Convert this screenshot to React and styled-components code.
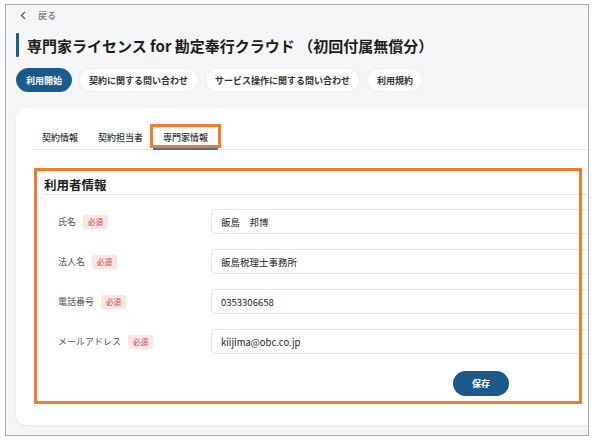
import React from 'react';
import styled, {createGlobalStyle} from 'styled-components';

const GlobalStyle = createGlobalStyle`
    body {
        margin: 0;
        background: #ffffff;
        font-family: "Noto Sans CJK JP", "Noto Sans", sans-serif;
    }
`;

const BLUE = '#1d5a8c';
const ORANGE = '#ee7d2f';

const Frame = styled.div`
    margin: 4px 5px;
    width: 572px;
    height: 430px;
    border: 1px solid #a8a8a8;
    background: #f5f6f8;
    overflow: hidden;
    display: flex;
    flex-direction: column;
    padding: 0 0 0 10px;
    box-sizing: content-box;
`;

const BackRow = styled.div`
    display: flex;
    align-items: center;
    height: 20px;
    padding-left: 4px;
    gap: 11px;
    font-size: 9px;
    color: #555;
`;

const TitleRow = styled.div`
    display: flex;
    align-items: center;
    margin-top: 8px;
    height: 24px;
    gap: 8px;
`;

const TitleBar = styled.span`
    width: 3px;
    height: 24px;
    background: ${BLUE};
    border-radius: 1px;
`;

const Title = styled.h1`
    margin: 0;
    font-size: 15px;
    font-weight: 700;
    color: #1c1c1c;
    white-space: nowrap;
`;

const PillRow = styled.div`
    display: flex;
    gap: 7px;
    margin-top: 11px;
`;

const Pill = styled.button`
    height: 24px;
    padding: 0 9px;
    border-radius: 12px;
    border: 1px solid ${p => p.active ? BLUE : '#eceef1'};
    background: ${p => p.active ? BLUE : '#ffffff'};
    color: ${p => p.active ? '#ffffff' : '#333'};
    font-family: inherit;
    font-size: 9px;
    font-weight: 600;
    white-space: nowrap;
    cursor: pointer;
`;

const Card = styled.div`
    margin-top: 16px;
    width: 600px;
    flex: none;
    height: 317px;
    background: #ffffff;
    border-radius: 10px 0 0 10px;
    box-shadow: 0 1px 3px rgba(0, 0, 0, 0.07);
    padding: 17px 0 0 16px;
    box-sizing: border-box;
`;

const Tabs = styled.div`
    display: flex;
    height: 24px;
    border-bottom: 1px solid #e8e8e8;
`;

const Tab = styled.div`
    position: relative;
    display: flex;
    align-items: center;
    padding: 0 10px;
    font-size: 9px;
    font-weight: 500;
    color: #333;
    white-space: nowrap;
    ${p => p.active && `
        &::after {
            content: '';
            position: absolute;
            left: 0;
            right: 0;
            bottom: -1px;
            height: 2px;
            background: #3f75a6;
        }
    `}
`;

const TabMark = styled.span`
    position: absolute;
    left: -3px;
    top: -1px;
    right: -3px;
    bottom: 1px;
    border: 3px solid ${ORANGE};
`;

const Section = styled.div`
    position: relative;
    margin: 18px 0 0 2px;
    padding: 8px 0 0 10px;
`;

const SectionMark = styled.span`
    position: absolute;
    left: 0;
    top: 0;
    width: 548px;
    height: 236px;
    border: 3px solid ${ORANGE};
    box-sizing: border-box;
    pointer-events: none;
`;

const SectionTitle = styled.h2`
    margin: 0;
    font-size: 12.5px;
    font-weight: 700;
    line-height: 18px;
    color: #1c1c1c;
    border-bottom: 1px solid #e6e6e6;
`;

const Fields = styled.div`
    display: flex;
    flex-direction: column;
    gap: 15px;
    margin-top: 14px;
`;

const FieldRow = styled.div`
    display: flex;
    align-items: center;
    height: 25px;
`;

const LabelCell = styled.div`
    width: 167px;
    padding-left: 14px;
    box-sizing: border-box;
    display: flex;
    align-items: center;
    gap: 7px;
    font-size: 9px;
    color: #555;
`;

const Badge = styled.span`
    display: inline-flex;
    align-items: center;
    height: 14px;
    padding: 0 5px;
    border-radius: 2px;
    background: #fde6e6;
    color: #d6404a;
    font-size: 7.5px;
`;

const Input = styled.div`
    width: 400px;
    height: 25px;
    border: 1px solid #e6e6e6;
    border-radius: 3px;
    box-sizing: border-box;
    display: flex;
    align-items: center;
    padding-left: 9px;
    font-size: 9.5px;
    color: #222;
    white-space: pre;
`;

const ButtonRow = styled.div`
    width: 465px;
    display: flex;
    justify-content: flex-end;
    margin-top: 17px;
`;

const SaveButton = styled.button`
    width: 56px;
    height: 25px;
    border: none;
    border-radius: 13px;
    background: ${BLUE};
    color: #fff;
    font-family: inherit;
    font-size: 9px;
    font-weight: 600;
    cursor: pointer;
`;

const fields = [
    {label: '氏名', value: '飯島　邦博'},
    {label: '法人名', value: '飯島税理士事務所'},
    {label: '電話番号', value: '0353306658'},
    {label: 'メールアドレス', value: 'kiijima@obc.co.jp'},
];

const App = () => (
    <>
        <GlobalStyle/>
        <Frame>
            <BackRow>
                <svg width="7" height="9" viewBox="0 0 7 9" fill="none">
                    <path d="M5 1L1.5 4.5L5 8" stroke="#555" strokeWidth="1.2"/>
                </svg>
                <span>戻る</span>
            </BackRow>
            <TitleRow>
                <TitleBar/>
                <Title>専門家ライセンス for 勘定奉行クラウド （初回付属無償分）</Title>
            </TitleRow>
            <PillRow>
                <Pill active>利用開始</Pill>
                <Pill>契約に関する問い合わせ</Pill>
                <Pill>サービス操作に関する問い合わせ</Pill>
                <Pill>利用規約</Pill>
            </PillRow>
            <Card>
                <Tabs>
                    <Tab>契約情報</Tab>
                    <Tab>契約担当者</Tab>
                    <Tab active>専門家情報<TabMark/></Tab>
                </Tabs>
                <Section>
                    <SectionMark/>
                    <SectionTitle>利用者情報</SectionTitle>
                    <Fields>
                        {fields.map(f => (
                            <FieldRow key={f.label}>
                                <LabelCell>{f.label}<Badge>必須</Badge></LabelCell>
                                <Input>{f.value}</Input>
                            </FieldRow>
                        ))}
                    </Fields>
                    <ButtonRow>
                        <SaveButton>保存</SaveButton>
                    </ButtonRow>
                </Section>
            </Card>
        </Frame>
    </>
);

export default App;
